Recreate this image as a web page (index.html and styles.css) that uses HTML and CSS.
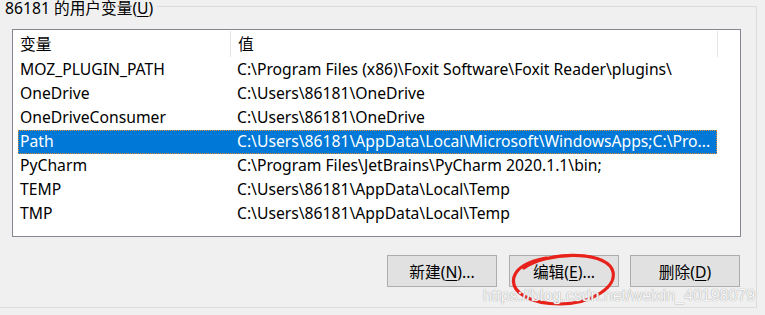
FILE: index.html
```html
<!DOCTYPE html>
<html lang="zh-CN">
<head>
<meta charset="utf-8">
<link rel="stylesheet" href="styles.css">
</head>
<body>
<div class="page">
  <section class="group">
    <div class="legend">86181 的用户变量(<u>U</u>)</div>
    <div class="list">
      <div class="head">
        <div class="hc c1">变量</div>
        <div class="hc c2">值</div>
      </div>
      <div class="row"><div class="c1">MOZ_PLUGIN_PATH</div><div class="c2">C:\Program Files (x86)\Foxit Software\Foxit Reader\plugins\</div></div>
      <div class="row"><div class="c1">OneDrive</div><div class="c2">C:\Users\86181\OneDrive</div></div>
      <div class="row"><div class="c1">OneDriveConsumer</div><div class="c2">C:\Users\86181\OneDrive</div></div>
      <div class="row sel"><div class="c1">Path</div><div class="c2">C:\Users\86181\AppData\Local\Microsoft\WindowsApps;C:\Pro...</div></div>
      <div class="row"><div class="c1">PyCharm</div><div class="c2">C:\Program Files\JetBrains\PyCharm 2020.1.1\bin;</div></div>
      <div class="row"><div class="c1">TEMP</div><div class="c2">C:\Users\86181\AppData\Local\Temp</div></div>
      <div class="row"><div class="c1">TMP</div><div class="c2">C:\Users\86181\AppData\Local\Temp</div></div>
    </div>
    <div class="buttons">
      <button class="btn">新建(<u>N</u>)...</button>
      <button class="btn">编辑(<u>E</u>)...</button>
      <button class="btn">删除(<u>D</u>)</button>
    </div>
  </section>
  <svg class="mark" width="765" height="315" viewBox="0 0 765 315">
    <path d="M524 268 C 546 252, 602 250, 612 269 C 620 287, 590 304, 560 304 C 530 304, 510 292, 514 277 C 517 267, 530 261, 546 258" fill="none" stroke="#e8221b" stroke-width="3.2" stroke-linecap="round"/>
  </svg>
  <div class="watermark">https://blog.csdn.net/weixin_40198079</div>
</div>
</body>
</html>
```
FILE: styles.css
```css
html, body {
  margin: 0;
  padding: 0;
  background: #f0f0f0;
}
body {
  font-family: "Noto Sans", "Noto Sans CJK SC", sans-serif;
  font-size: 15.7px;
  color: #000;
}
.page {
  position: relative;
  width: 765px;
  height: 315px;
  overflow: hidden;
}
.group {
  position: relative;
  margin-top: 6px;
  width: 756px;
  height: 300px;
  border: 1px solid #dcdcdc;
  border-left: none;
  box-sizing: content-box;
  padding: 0;
}
.legend {
  position: absolute;
  left: 0;
  top: -6px;
  padding: 0 4px 0 5px;
  background: #f0f0f0;
  line-height: 15px;
  white-space: nowrap;
}
.legend u { text-underline-offset: 2px; }
.list {
  margin: 22px 0 0 12px;
  width: 727px;
  height: 206px;
  border: 1px solid #828790;
  background: #fff;
}
.head {
  display: flex;
  height: 27px;
  padding-left: 5px;
}
.hc {
  margin-top: 1px;
  line-height: 26px;
  white-space: nowrap;
  border-right: 1px solid #e5e5e5;
}
.head .c1 { width: 210px; padding-left: 2px; }
.head .c2 { width: 479px; padding-left: 7px; }
.row {
  display: flex;
  height: 24px;
  line-height: 23px;
  margin-left: 5px;
  width: 699px;
  white-space: nowrap;
}
.row .c1 { width: 210px; padding-left: 2px; }
.row .c2 { width: 480px; padding-left: 7px; overflow: hidden; }
.row.sel {
  background: #0078d7;
  color: #fff;
  outline: 1px dotted #e08a2c;
  outline-offset: -1px;
}
.list .row:nth-child(2) { margin-top: 1px; }
.buttons {
  display: flex;
  justify-content: flex-end;
  gap: 12px;
  margin-top: 18px;
  width: 740px;
}
.btn {
  width: 110px;
  height: 32px;
  background: #e1e1e1;
  border: 1px solid #adadad;
  font-family: "Noto Sans", "Noto Sans CJK SC", sans-serif;
  font-size: 15.7px;
  color: #000;
  padding: 0;
  margin: 0;
}
.btn:last-child { margin-left: -1px; }
.btn u { text-underline-offset: 2px; }
.mark {
  position: absolute;
  left: 0;
  top: 0;
  pointer-events: none;
}
.watermark {
  position: absolute;
  left: 483px;
  top: 286px;
  font-family: "Liberation Sans", Arial, sans-serif;
  font-size: 16px;
  line-height: 19px;
  color: #f6f6f6;
  text-shadow: 0 0 1px #a8a8a8, 0 0 1px #b8b8b8;
  white-space: nowrap;
}
```
